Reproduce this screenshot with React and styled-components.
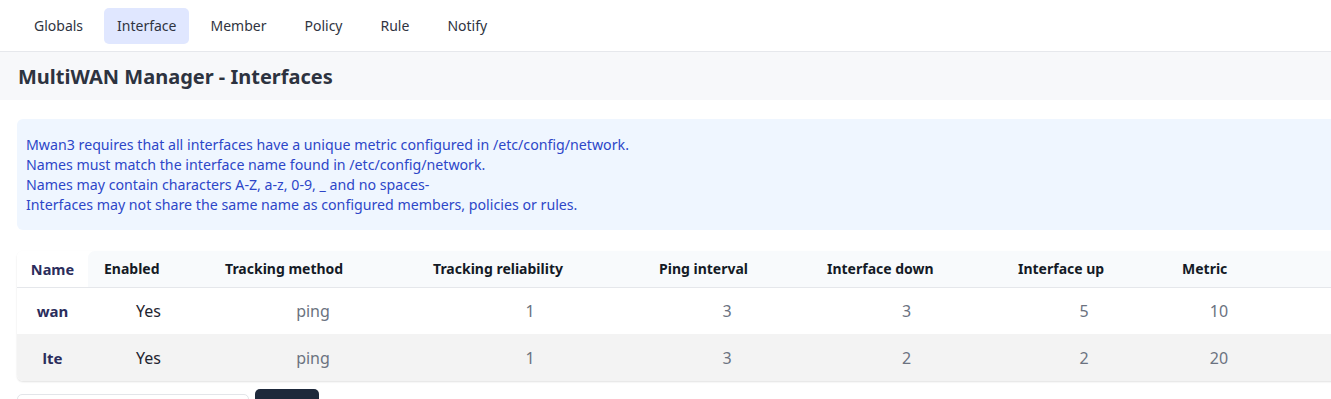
import React from "react";
import styled, { createGlobalStyle } from "styled-components";

const Global = createGlobalStyle`
  html, body { margin: 0; padding: 0; overflow: hidden; background: #fff; }
  body { font-family: "Noto Sans", "Open Sans", sans-serif; color: #1f2937; }
  * { box-sizing: border-box; }
`;

const Page = styled.div`
  width: 1480px;
  display: flex;
  flex-direction: column;
`;

const Nav = styled.nav`
  height: 52px;
  display: flex;
  align-items: center;
  gap: 8px;
  padding: 0 0 0 21px;
  border-bottom: 1px solid #e6e8ec;
  box-shadow: 0 1px 2px rgba(0,0,0,0.03);
  background: #fff;
`;

const Tab = styled.button`
  height: 36px;
  padding: 0 13px;
  border: none;
  border-radius: 5px;
  background: ${p => (p.$active ? "#e0e7ff" : "transparent")};
  color: #2f3441;
  font-family: inherit;
  font-size: 14px;
  cursor: pointer;
  &:nth-child(n+4) { margin-left: 4px; }
`;

const TitleBar = styled.header`
  height: 48px;
  display: flex;
  align-items: center;
  padding-left: 18px;
  background: #f7f8fa;
`;

const Title = styled.h1`
  margin: 0;
  font-size: 20px;
  font-weight: 700;
  color: #2d3340;
`;

const Content = styled.main`
  padding: 19px 0 0 17px;
  display: flex;
  flex-direction: column;
`;

const Info = styled.div`
  background: #eff6ff;
  border-radius: 6px 0 0 6px;
  padding: 16px 9px 15px;
  color: #2d46c8;
  font-size: 14.2px;
  line-height: 20px;
`;

const TableWrap = styled.div`
  margin-top: 21px;
  border-radius: 6px 0 0 6px;
  box-shadow: 0 1px 2px rgba(0,0,0,0.12);
  overflow: hidden;
`;

const Table = styled.table`
  border-collapse: collapse;
  table-layout: fixed;
  width: 100%;
  font-size: 14px;
`;

const Th = styled.th`
  height: 36px;
  padding: 0 16px;
  text-align: left;
  font-weight: 700;
  color: #141a26;
  background: #f8fafc;
  border-bottom: 1px solid #e5e7eb;
  &:nth-child(2) { border-top-left-radius: 7px; }
`;

const NameTh = styled.th`
  height: 36px;
  padding: 0;
  text-align: center;
  font-size: 14.5px;
  font-weight: 700;
  color: #2b2d5c;
  background: #fff;
  border-bottom: 1px solid #e5e7eb;
`;

const Row = styled.tr`
  background: ${p => (p.$alt ? "#f3f3f3" : "#fff")};
  & + & td { border-top: 1px solid #e5e7eb; }
`;

const NameTd = styled.td`
  height: 47px;
  text-align: center;
  font-size: 15px;
  font-weight: 700;
  color: #2b2d5c;
`;

const Td = styled.td`
  height: 47px;
  text-align: center;
  font-size: 16px;
  color: ${p => (p.$strong ? "#1f2430" : "#6b7280")};
`;

const Controls = styled.div`
  margin-top: 8px;
  display: flex;
  align-items: flex-start;
  gap: 6px;
`;

const Input = styled.input`
  margin-top: 5px;
  width: 232px;
  height: 32px;
  border: 1px solid #e3e5e9;
  border-radius: 5px;
  background: #fff;
`;

const AddButton = styled.button`
  width: 64px;
  height: 36px;
  border: none;
  border-radius: 5px;
  background: #1e293b;
  color: #fff;
  font-family: inherit;
  font-size: 14px;
`;

const tabs = ["Globals", "Interface", "Member", "Policy", "Rule", "Notify"];
const cols = [
  ["Enabled", 121],
  ["Tracking method", 208],
  ["Tracking reliability", 226],
  ["Ping interval", 168],
  ["Interface down", 191],
  ["Interface up", 164],
  ["Metric", 106],
];
const rows = [
  ["wan", "Yes", "ping", "1", "3", "3", "5", "10"],
  ["lte", "Yes", "ping", "1", "3", "2", "2", "20"],
];

export default function App() {
  return (
    <Page>
      <Global />
      <Nav>
        {tabs.map(t => (
          <Tab key={t} $active={t === "Interface"}>{t}</Tab>
        ))}
      </Nav>
      <TitleBar>
        <Title>MultiWAN Manager - Interfaces</Title>
      </TitleBar>
      <Content>
        <Info>
          Mwan3 requires that all interfaces have a unique metric configured in /etc/config/network.<br />
          Names must match the interface name found in /etc/config/network.<br />
          Names may contain characters A-Z, a-z, 0-9, _ and no spaces-<br />
          Interfaces may not share the same name as configured members, policies or rules.
        </Info>
        <TableWrap>
          <Table>
            <colgroup>
              <col style={{ width: 71 }} />
              {cols.map(([n, w]) => <col key={n} style={{ width: w }} />)}
              <col />
            </colgroup>
            <thead>
              <tr>
                <NameTh>Name</NameTh>
                {cols.map(([n]) => <Th key={n}>{n}</Th>)}
                <Th />
              </tr>
            </thead>
            <tbody>
              {rows.map((r, i) => (
                <Row key={r[0]} $alt={i % 2 === 1}>
                  <NameTd>{r[0]}</NameTd>
                  {r.slice(1).map((v, j) => (
                    <Td key={j} $strong={j === 0}>{v}</Td>
                  ))}
                  <Td />
                </Row>
              ))}
            </tbody>
          </Table>
        </TableWrap>
        <Controls>
          <Input />
          <AddButton>Add</AddButton>
        </Controls>
      </Content>
    </Page>
  );
}
